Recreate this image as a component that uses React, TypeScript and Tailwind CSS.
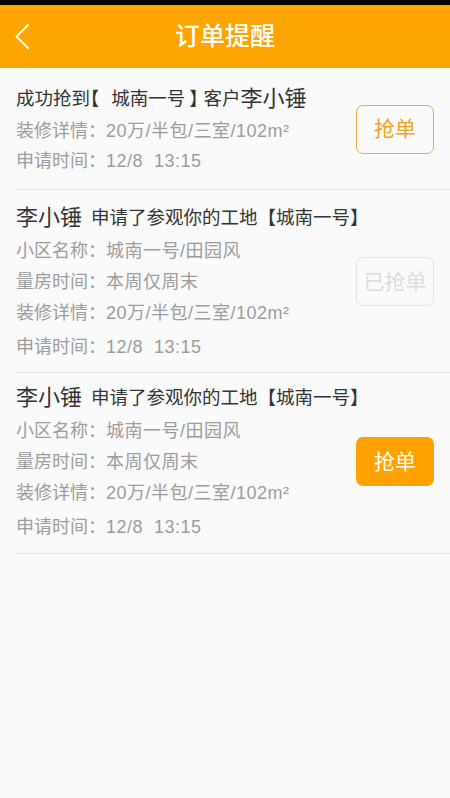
import React from 'react';

type Order = {
  head: React.ReactNode;
  lines: { label: string; value: string }[];
  status: 'outline' | 'done' | 'filled';
  pad: string;
  lineH: string;
};

const visitLines = [
  { label: '小区名称：', value: '城南一号/田园风' },
  { label: '量房时间：', value: '本周仅周末' },
  { label: '装修详情：', value: '20万/半包/三室/102m²' },
  { label: '申请时间：', value: '12/8\u00a0\u00a013:15' },
];

const visitHead = (
  <>
    <span className="text-[22px]">李小锤</span>
    <span className="ml-[9px] text-[18.5px]">申请了参观你的工地【城南一号】</span>
  </>
);

const orders: Order[] = [
  {
    head: (
      <>
        <span className="text-[18.5px]">
          成功抢到
          <span className="inline-block mr-[12px] [font-feature-settings:'halt']">【</span>
          城南一号
          <span className="inline-block ml-[4px] mr-[5px] [font-feature-settings:'halt']">】</span>
          客户
        </span>
        <span className="text-[22px]">李小锤</span>
      </>
    ),
    lines: [
      { label: '装修详情：', value: '20万/半包/三室/102m²' },
      { label: '申请时间：', value: '12/8\u00a0\u00a013:15' },
    ],
    status: 'outline',
    pad: 'pt-[14px] pb-[13px]',
    lineH: 'h-[30px]',
  },
  {
    head: visitHead,
    lines: visitLines,
    status: 'done',
    pad: 'pt-[11px] pb-[10px]',
    lineH: 'h-[31px]',
  },
  {
    head: visitHead,
    lines: visitLines,
    status: 'filled',
    pad: 'pt-[8px] pb-[11px]',
    lineH: 'h-[31px]',
  },
];

const GrabButton: React.FC<{ status: Order['status'] }> = ({ status }) => {
  if (status === 'done') {
    return (
      <button className="w-[78px] h-[49px] shrink-0 rounded-[7px] border border-[#e2e2e2] text-[21px] text-[#dcdcdc]">
        已抢单
      </button>
    );
  }
  if (status === 'filled') {
    return (
      <button className="w-[78px] h-[49px] shrink-0 rounded-[7px] bg-[#ffa200] text-[21px] text-white">
        抢单
      </button>
    );
  }
  return (
    <button className="w-[78px] h-[49px] shrink-0 rounded-[7px] border-[1.5px] border-[#f2a73a] text-[21px] text-[#f3a12a]">
      抢单
    </button>
  );
};

export default function App() {
  return (
    <div
      className="min-h-[798px] w-[450px] bg-[#fafafa]"
      style={{ fontFamily: '"Liberation Sans", "Noto Sans CJK SC", sans-serif' }}
    >
      <div className="h-[5px] bg-black" />
      <header className="h-[63px] bg-[#ffa500] flex items-center">
        <div className="w-[60px] pl-[15px] flex items-center">
          <svg width="15" height="25" viewBox="0 0 15 25" fill="none">
            <polyline points="13,1 1.5,12.5 13,24" stroke="white" strokeWidth="2" strokeLinecap="round" strokeLinejoin="round" />
          </svg>
        </div>
        <h1 className="flex-1 text-center text-[25px] text-white font-medium leading-none">订单提醒</h1>
        <div className="w-[60px]" />
      </header>

      <div className="pl-[15px]">
        {orders.map((o, i) => (
          <div key={i} className={`flex items-center border-b border-[#e3e3e3] pr-4 ${o.pad}`}>
            <div className="flex-1 min-w-0 pl-px">
              <div className="h-[34px] flex items-center text-[#333] whitespace-nowrap leading-none">{o.head}</div>
              {o.lines.map((l, j) => (
                <div
                  key={j}
                  className={`${o.lineH} flex items-center text-[18px] text-[#9c9c9c] whitespace-nowrap leading-none ${
                    o.lines.length > 2 && j === o.lines.length - 1 ? 'mt-[3px]' : ''
                  }`}
                >
                  <span>{l.label}</span>
                  <span className="tracking-[0.5px]">{l.value}</span>
                </div>
              ))}
            </div>
            <GrabButton status={o.status} />
          </div>
        ))}
      </div>
    </div>
  );
}
